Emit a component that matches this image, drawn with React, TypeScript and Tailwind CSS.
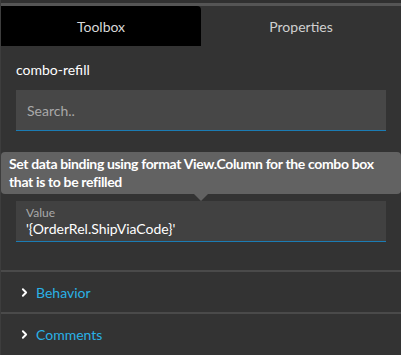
import { ChevronRight } from "lucide-react";

const font = { fontFamily: "Lato, 'Open Sans', sans-serif" };

export default function App() {
  return (
    <div className="w-[401px] h-[355px] bg-[#333333] overflow-hidden border-l border-[#3d3d3d] text-white" style={font}>
      <div className="h-[3px] bg-[#303030]" />
      <div className="h-[3px] bg-[#555555]" />
      {/* tabs */}
      <div className="flex h-[40px] text-[14px]">
        <div className="w-[200px] bg-black rounded-tr-[4px] flex items-center justify-center text-[#d8d8d8]">Toolbox</div>
        <div className="flex-1 flex items-center justify-center text-[#d0d0d0]">Properties</div>
      </div>

      <div className="px-[15px]">
        <div className="pt-[15px] pb-[11px] text-[14px] leading-[18px] text-white">combo-refill</div>
        <div className="h-[41px] bg-[#474747] border-b border-[#1b7cb4] flex items-center px-[11px] text-[14px] text-[#a9a9a9]">
          Search..
        </div>
      </div>

      {/* tooltip */}
      <div className="relative mt-[21px] bg-[#626262] rounded-[4px] pl-[8px] pr-[20px] py-[3px] text-[14px] leading-[18px] font-bold tracking-[-0.35px] text-white">
        Set data binding using format View.Column for the combo box that is to be refilled
        <div className="absolute left-[193px] -bottom-[7px] w-0 h-0 border-l-[7px] border-r-[7px] border-t-[7px] border-l-transparent border-r-transparent border-t-[#626262]" />
      </div>

      <div className="px-[15px] mt-[7px]">
        <div className="h-[41px] bg-[#414141] border-b border-[#1b7cb4] px-[10px] pt-[5px]">
          <div className="text-[12px] leading-[14px] text-[#a9a9a9]">Value</div>
          <div className="text-[14px] leading-[18px] text-white">'{"{OrderRel.ShipViaCode}"}'</div>
        </div>
      </div>

      <div className="mt-[28px] h-[2px] bg-[#4a4a4a]" />
      <div className="h-[40px] flex items-center pl-[17px] gap-[5px] text-[14px] text-[#2ab1e6]">
        <ChevronRight size={13} strokeWidth={3.5} className="text-white" />
        Behavior
      </div>
      <div className="h-[2px] bg-[#4a4a4a]" />
      <div className="h-[40px] flex items-center pl-[17px] gap-[5px] text-[14px] text-[#2ab1e6]">
        <ChevronRight size={13} strokeWidth={3.5} className="text-white" />
        Comments
      </div>
    </div>
  );
}
